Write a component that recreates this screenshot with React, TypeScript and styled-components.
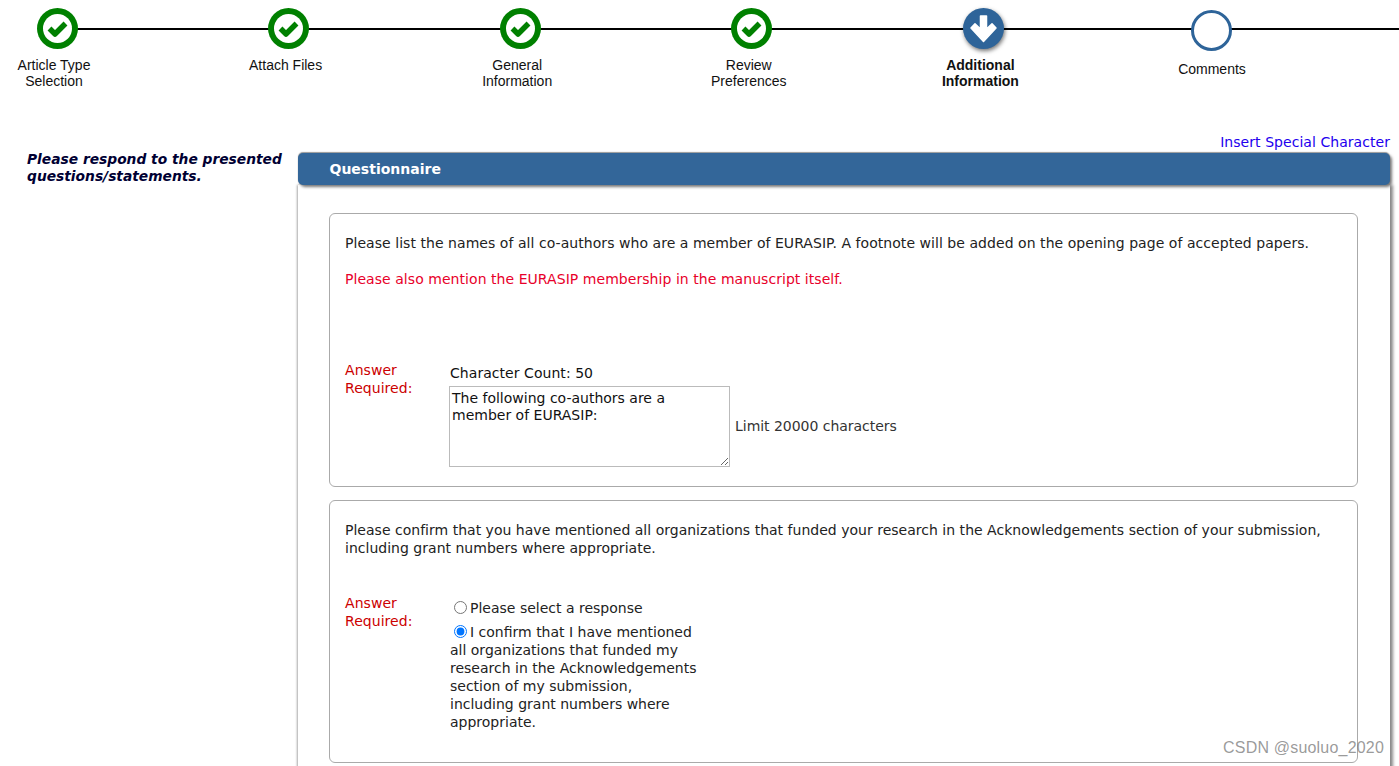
import styled, { createGlobalStyle } from 'styled-components';

const GlobalStyle = createGlobalStyle`
  html, body {
    margin: 0;
    height: 766px;
    overflow: hidden;
    background: #fff;
  }
  body {
    font-family: 'DejaVu Sans', Verdana, sans-serif;
    font-size: 14px;
    letter-spacing: 0.05px;
    line-height: 18px;
    color: #222;
  }
`;

const Page = styled.div`
  position: relative;
  width: 1399px;
  height: 766px;
  overflow: hidden;
`;

const Stepper = styled.ol`
  position: relative;
  display: flex;
  gap: 123.6px;
  height: 124px;
  margin: 0;
  padding: 8px 0 0;
  list-style: none;
  letter-spacing: 0;

  &::before {
    content: '';
    position: absolute;
    top: 28px;
    left: 57px;
    right: 0;
    height: 2px;
    background: #000;
  }
`;

const Step = styled.li<{ $todo?: boolean }>`
  position: relative;
  display: flex;
  flex-direction: column;
  align-items: center;
  flex: 0 0 108px;
  padding-top: ${(p) => (p.$todo ? '2px' : '0')};
`;

const Badge = styled.span<{ $todo?: boolean }>`
  display: block;
  width: 41px;
  height: 41px;
  margin-left: ${(p) => (p.$todo ? '0' : '6px')};
`;

const Label = styled.span<{ $active?: boolean; $todo?: boolean }>`
  margin-top: ${(p) => (p.$todo ? '10px' : '8px')};
  font-family: 'Liberation Sans', Arial, sans-serif;
  font-size: 14px;
  line-height: 16px;
  font-weight: ${(p) => (p.$active ? 700 : 400)};
  text-align: center;
  color: #111;
`;

const Main = styled.div`
  display: flex;
`;

const Intro = styled.p`
  flex: 0 0 271px;
  margin: 19px 0 0 27px;
  font-size: 13.8px;
  line-height: 17px;
  letter-spacing: 0;
  font-weight: 700;
  font-style: italic;
  color: #000033;
`;

const Content = styled.div`
  flex: 0 0 1092px;
`;

const SpecialLink = styled.a`
  display: block;
  height: 21px;
  text-align: right;
  line-height: 20px;
  color: #2200ee;
  text-decoration: none;
  cursor: pointer;
`;

const PanelHeader = styled.h2`
  position: relative;
  z-index: 1;
  height: 32px;
  margin: 0;
  padding: 0 32px 0 31.5px;
  border-radius: 5px;
  background: #336699;
  box-shadow: 2px 2px 3px #777, 0 -1px 1px #999;
  font-size: 14px;
  line-height: 32px;
  letter-spacing: 0;
  font-weight: 700;
  color: #fff;
`;

const PanelBody = styled.div`
  display: flex;
  flex-direction: column;
  gap: 13px;
  padding: 28px 32px 20px 31px;
  background: #fff;
  box-shadow: 3px 0 3px #888, -1px 0 2px #aaa;
`;

const Question = styled.section<{ $height: number }>`
  box-sizing: border-box;
  height: ${(p) => p.$height}px;
  padding: 20px 15px 0;
  border: 1px solid #aaa;
  border-radius: 6px;
`;

const Prompt = styled.p<{ $tight?: boolean }>`
  margin: 0;
  letter-spacing: ${(p) => (p.$tight ? '0.015px' : '0.05px')};
`;

const Warning = styled.p`
  margin: 18px 0 0;
  color: #e8002a;
`;

const Answer = styled.div<{ $top: number }>`
  display: grid;
  grid-template-columns: 104px 1fr;
  margin-top: ${(p) => p.$top}px;
`;

const Required = styled.div`
  width: 80px;
  color: #cc0000;
`;

const CharCount = styled.div`
  margin: 3px 0 4px 1px;
  color: #111;
`;

const TextRow = styled.div`
  display: flex;
  align-items: center;
  gap: 5px;
`;

const TextBox = styled.textarea`
  box-sizing: border-box;
  width: 281px;
  height: 81px;
  margin: 0;
  padding: 3px 2px 2px;
  border: 1px solid #bbb;
  border-radius: 0;
  outline: none;
  font-family: 'DejaVu Sans', Verdana, sans-serif;
  font-size: 14px;
  line-height: 17px;
  color: #111;
`;

const Limit = styled.span`
  margin-bottom: 2px;
  letter-spacing: -0.03px;
  color: #333;
`;

const Options = styled.div`
  width: 251px;
  padding-top: 5px;
  letter-spacing: 0;
`;

const Option = styled.label`
  display: block;
  margin-bottom: 6px;
  padding-left: 1px;
`;

const Radio = styled.input`
  width: 13px;
  height: 13px;
  margin: 0 3px 0 4px;
  vertical-align: -1px;
`;

const Watermark = styled.div`
  position: absolute;
  top: 738px;
  left: 1223px;
  font-family: 'Liberation Sans', Arial, sans-serif;
  font-size: 16px;
  line-height: 20px;
  letter-spacing: 0.2px;
  color: rgba(110, 110, 110, 0.7);
`;

const DoneIcon = () => (
  <Badge>
    <svg width="41" height="41" viewBox="0 0 41 41">
      <circle cx="20.5" cy="20.5" r="20.5" fill="#008000" />
      <circle cx="20.5" cy="20.5" r="14.5" fill="#fff" />
      <path d="M12.5 20.5 L18 26 L28.5 15.5" fill="none" stroke="#008000" strokeWidth="5.5" strokeLinejoin="round" />
    </svg>
  </Badge>
);

const ActiveIcon = () => (
  <Badge>
    <svg width="46" height="46" viewBox="0 0 46 46" overflow="visible" style={{ filter: 'drop-shadow(1px 2px 2px rgba(0,0,0,.55))' }}>
      <circle cx="20.5" cy="20.5" r="20.5" fill="#2e6499" />
      <path
        d="M17.5 8 H23.5 V21 L29 15.8 L33 20 L20.5 33.5 L8 20 L12 15.8 L17.5 21 Z"
        fill="#fff"
        stroke="#fff"
        strokeWidth="1.5"
        strokeLinejoin="round"
      />
    </svg>
  </Badge>
);

const TodoIcon = () => (
  <Badge $todo>
    <svg width="41" height="41" viewBox="0 0 41 41">
      <circle cx="20.5" cy="20.5" r="19" fill="#fff" stroke="#2e6499" strokeWidth="3" />
    </svg>
  </Badge>
);

const App = () => (
  <Page>
    <GlobalStyle />

    <Stepper>
      <Step>
        <DoneIcon />
        <Label>Article Type<br />Selection</Label>
      </Step>
      <Step>
        <DoneIcon />
        <Label>Attach Files</Label>
      </Step>
      <Step>
        <DoneIcon />
        <Label>General<br />Information</Label>
      </Step>
      <Step>
        <DoneIcon />
        <Label>Review<br />Preferences</Label>
      </Step>
      <Step>
        <ActiveIcon />
        <Label $active>Additional<br />Information</Label>
      </Step>
      <Step $todo>
        <TodoIcon />
        <Label $todo>Comments</Label>
      </Step>
    </Stepper>

    <Main>
      <Intro>Please respond to the presented questions/statements.</Intro>

      <Content>
        <SpecialLink>Insert Special Character</SpecialLink>
        <PanelHeader>Questionnaire</PanelHeader>

        <PanelBody>
          <Question $height={274}>
            <Prompt>
              Please list the names of all co-authors who are a member of EURASIP. A footnote will be added on the opening page of accepted papers.
            </Prompt>
            <Warning>Please also mention the EURASIP membership in the manuscript itself.</Warning>
            <Answer $top={73}>
              <Required>Answer Required:</Required>
              <div>
                <CharCount>Character Count: 50</CharCount>
                <TextRow>
                  <TextBox defaultValue="The following co-authors are a member of EURASIP:" />
                  <Limit>Limit 20000 characters</Limit>
                </TextRow>
              </div>
            </Answer>
          </Question>

          <Question $height={263}>
            <Prompt $tight>
              Please confirm that you have mentioned all organizations that funded your research in the Acknowledgements section of your submission, including grant numbers where appropriate.
            </Prompt>
            <Answer $top={37}>
              <Required>Answer Required:</Required>
              <Options>
                <Option>
                  <Radio type="radio" name="funding" />
                  Please select a response
                </Option>
                <Option>
                  <Radio type="radio" name="funding" defaultChecked />
                  I confirm that I have mentioned all organizations that funded my research in the Acknowledgements section of my submission, including grant numbers where appropriate.
                </Option>
              </Options>
            </Answer>
          </Question>
        </PanelBody>
      </Content>
    </Main>

    <Watermark>CSDN @suoluo_2020</Watermark>
  </Page>
);

export default App;
